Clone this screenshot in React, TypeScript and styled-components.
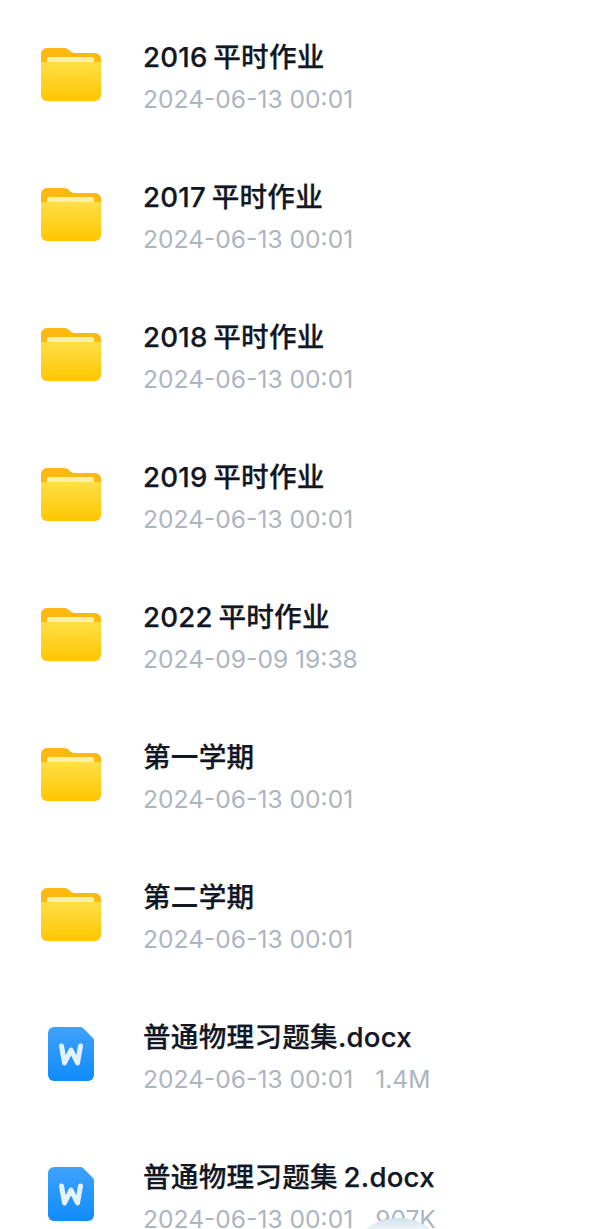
import React from 'react';
import styled, { createGlobalStyle } from 'styled-components';

const GlobalStyle = createGlobalStyle`
  html, body {
    margin: 0;
    padding: 0;
    background: #fff;
  }
`;

const Page = styled.div`
  position: relative;
  width: 600px;
  height: 1229px;
  overflow: hidden;
  background: #fff;
  font-family: Inter, 'Liberation Sans', 'Noto Sans CJK SC', sans-serif;
`;

const FileList = styled.ul`
  list-style: none;
  margin: 0;
  padding: 0;
`;

const Row = styled.li`
  display: flex;
  align-items: flex-start;
  height: 140px;
  box-sizing: border-box;
  padding-top: 37px;
`;

const IconSlot = styled.div`
  width: 143px;
  flex: none;
  padding: 11px 0 0 41px;
  box-sizing: border-box;

  svg {
    display: block;
  }
`;

const Info = styled.div`
  flex: 1;
  min-width: 0;
`;

const Name = styled.div`
  font-size: 27.6px;
  line-height: 40px;
  font-weight: 500;
  letter-spacing: 0.25px;
  word-spacing: -2px;
  color: #111724;
  -webkit-text-stroke: 0.25px #111724;
  white-space: nowrap;
`;

const Meta = styled.div`
  display: flex;
  gap: 22px;
  margin-top: 2px;
  font-size: 24.6px;
  line-height: 40px;
  color: #aeb4c0;
  white-space: nowrap;
`;

const FloatingButton = styled.div`
  position: absolute;
  left: 343px;
  top: 1218px;
  width: 110px;
  height: 110px;
  border-radius: 50%;
  background: linear-gradient(180deg, #cfe0ec 0%, #eef4f8 10%, #f7fafc 20%);
`;

function FolderIcon() {
  return (
    <svg width="60" height="53" viewBox="0 0 60 53">
      <defs>
        <linearGradient id="folderFront" x1="0" y1="0" x2="0" y2="1">
          <stop offset="0" stopColor="#ffdf45" />
          <stop offset="1" stopColor="#ffc600" />
        </linearGradient>
      </defs>
      <path d="M0 6a6 6 0 0 1 6-6h17c3 0 4 1 5.500 2.500C30 4 31 5 34 5h20a6 6 0 0 1 6 6v10H0z" fill="#fdb813" />
      <rect x="6" y="9" width="47" height="7" rx="2" fill="#ffeeb0" />
      <path d="M0 14h60v33a6 6 0 0 1-6 6H6a6 6 0 0 1-6-6z" fill="url(#folderFront)" />
    </svg>
  );
}

function WordIcon() {
  return (
    <svg width="46" height="54" viewBox="0 0 46 54" style={{ marginLeft: 7, marginTop: -1 }}>
      <defs>
        <linearGradient id="wordBody" x1="0" y1="0" x2="0" y2="1">
          <stop offset="0" stopColor="#3ea2fb" />
          <stop offset="1" stopColor="#118cfb" />
        </linearGradient>
      </defs>
      <path d="M6 0h26c1.500 0 2.500.5 3.500 1.500l9 9c1 1 1.500 2 1.500 3.500v34a6 6 0 0 1-6 6H6a6 6 0 0 1-6-6V6a6 6 0 0 1 6-6z" fill="url(#wordBody)" />
      <path d="M13.500 19l3 17 6.500-13 6.500 13 3-17" fill="none" stroke="#e4f2fd" strokeWidth="5" strokeLinecap="round" strokeLinejoin="round" />
    </svg>
  );
}

const items = [
  { name: '2016 平时作业', date: '2024-06-13 00:01', type: 'folder' },
  { name: '2017 平时作业', date: '2024-06-13 00:01', type: 'folder' },
  { name: '2018 平时作业', date: '2024-06-13 00:01', type: 'folder' },
  { name: '2019 平时作业', date: '2024-06-13 00:01', type: 'folder' },
  { name: '2022 平时作业', date: '2024-09-09 19:38', type: 'folder' },
  { name: '第一学期', date: '2024-06-13 00:01', type: 'folder' },
  { name: '第二学期', date: '2024-06-13 00:01', type: 'folder' },
  { name: '普通物理习题集.docx', date: '2024-06-13 00:01', size: '1.4M', type: 'word' },
  { name: '普通物理习题集 2.docx', date: '2024-06-13 00:01', size: '907K', type: 'word' },
];

export default function App() {
  return (
    <Page>
      <GlobalStyle />
      <FileList>
        {items.map((item) => (
          <Row key={item.name}>
            <IconSlot>{item.type === 'folder' ? <FolderIcon /> : <WordIcon />}</IconSlot>
            <Info>
              <Name>{item.name}</Name>
              <Meta>
                <span>{item.date}</span>
                {item.size && <span>{item.size}</span>}
              </Meta>
            </Info>
          </Row>
        ))}
      </FileList>
      <FloatingButton />
    </Page>
  );
}
